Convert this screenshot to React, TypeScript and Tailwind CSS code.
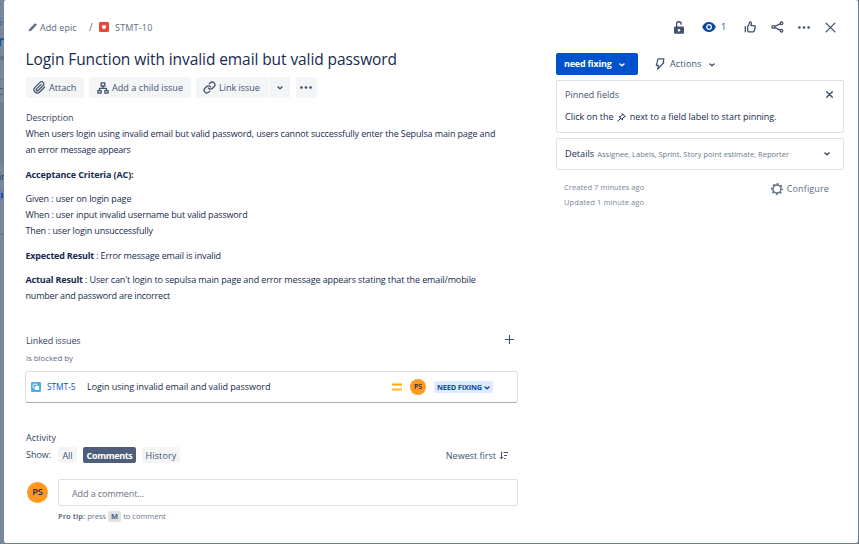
import type { ReactNode } from "react";

type IconProps = { className?: string };

const Chevron = ({ className = "" }: IconProps) => (
  <svg viewBox="0 0 6 4" className={`h-[4px] w-[6px] shrink-0 ${className}`} fill="none" stroke="currentColor" strokeWidth="1.5" strokeLinecap="round" strokeLinejoin="round">
    <path d="M1 1 3 2.800 5 1" />
  </svg>
);

const Pencil = () => (
  <svg viewBox="0 0 9 9" className="h-[9px] w-[9px] shrink-0" fill="currentColor">
    <path d="M.8 8.400 1.300 6 5.200 2.100 7 3.900 3.100 7.800Z" />
    <path d="M5.200 2.100 6.500.8a1.200 1.200 0 0 1 1.700 1.700L7 3.900Z" />
  </svg>
);

const Paperclip = () => (
  <svg viewBox="0 0 24 24" className="h-[13px] w-[13px] shrink-0" fill="none" stroke="currentColor" strokeWidth="2.300" strokeLinecap="round" strokeLinejoin="round">
    <path d="m21.400 11.100-9.200 9.200a6 6 0 0 1-8.500-8.500l9.200-9.200a4 4 0 0 1 5.700 5.700l-9.200 9.200a2 2 0 0 1-2.900-2.900l8.500-8.400" />
  </svg>
);

const ChildIssue = () => (
  <svg viewBox="0 0 12 12" className="h-[12px] w-[12px] shrink-0" fill="none" stroke="currentColor" strokeWidth="1.300" strokeLinejoin="round">
    <path d="M4.200.9h3.600v3.100H4.200ZM.9 8.600h3.200v2.500H.9ZM7.900 8.600h3.200v2.500H7.900ZM6 4v2.300M2.500 8.600V6.300h7v2.300" />
  </svg>
);

const LinkIcon = () => (
  <svg viewBox="0 0 24 24" className="h-[13px] w-[13px] shrink-0" fill="none" stroke="currentColor" strokeWidth="2.400" strokeLinecap="round" strokeLinejoin="round">
    <path d="M10 13a5 5 0 0 0 7.540.540l3-3a5 5 0 0 0-7.070-7.070l-1.720 1.710" />
    <path d="M14 11a5 5 0 0 0-7.540-.540l-3 3a5 5 0 0 0 7.070 7.070l1.710-1.710" />
  </svg>
);

const Dots = () => (
  <svg viewBox="0 0 12 3" className="h-[3px] w-[12px] shrink-0" fill="currentColor">
    <circle cx="1.400" cy="1.500" r="1.350" />
    <circle cx="6" cy="1.500" r="1.350" />
    <circle cx="10.600" cy="1.500" r="1.350" />
  </svg>
);

const Unlock = () => (
  <svg viewBox="0 0 10 13" className="h-[13px] w-[10px]" fill="none">
    <rect x="0" y="5.600" width="10" height="7.200" rx="1.200" fill="currentColor" />
    <path d="M2.600 6V3.200a2.300 2.300 0 0 1 4.600-.3v.9" stroke="currentColor" strokeWidth="1.300" />
    <circle cx="5" cy="9.200" r="1.200" fill="#fff" />
  </svg>
);

const Eye = () => (
  <svg viewBox="0 0 14 12" className="h-[12px] w-[14px]" fill="none">
    <path d="M.2 6C1.600 2.600 4 .9 7 .9s5.400 1.700 6.800 5.100C12.400 9.400 10 11.100 7 11.100S1.600 9.400.2 6Z" fill="#0747a6" />
    <circle cx="7" cy="6" r="2.300" fill="#0747a6" stroke="#fff" strokeWidth="1.300" />
  </svg>
);

const ThumbUp = () => (
  <svg viewBox="0 0 12 12" className="h-[12px] w-[12px]" fill="none" stroke="currentColor" strokeWidth="1.300" strokeLinejoin="round" strokeLinecap="round">
    <path d="M1.300 5.600v5.200" />
    <path d="M3.700 5.400C5.200 4.500 5.300 2.700 5.600 1.300 6.500.6 7.600 1.400 7.400 2.600L7 4.600h3c.9 0 1.400.7 1.200 1.500l-.9 3.700c-.2.700-.6 1-1.200 1H4.700c-.6 0-1-.4-1-1Z" />
  </svg>
);

const Share = () => (
  <svg viewBox="0 0 13 12" className="h-[12px] w-[13px]" fill="none" stroke="currentColor" strokeWidth="1.300">
    <circle cx="2.300" cy="6" r="1.400" />
    <circle cx="10.500" cy="2.300" r="1.300" />
    <circle cx="10.500" cy="9.700" r="1.300" />
    <path d="M3.700 5.300 9.200 2.900M3.700 6.700 9.200 9.100" />
  </svg>
);

const Cross = ({ className = "" }: IconProps) => (
  <svg viewBox="0 0 10 10" className={`shrink-0 ${className}`} fill="none" stroke="currentColor" strokeLinecap="round">
    <path d="m1 1 8 8M9 1 1 9" />
  </svg>
);

const Bolt = () => (
  <svg viewBox="0 0 10 12" className="h-[12px] w-[10px] shrink-0" fill="none" stroke="currentColor" strokeWidth="1.200" strokeLinejoin="round">
    <path d="M3 .9h5.900L8.100 4.500h.8L2.700 11l.7-3.600H1.300Z" />
  </svg>
);

const Pin = () => (
  <svg viewBox="0 0 9 9" className="mt-px mr-[4px] ml-[3px] h-[9px] w-[9px] shrink-0" fill="none" stroke="currentColor" strokeWidth="1" strokeLinejoin="round" strokeLinecap="round">
    <path d="M5.500.9 8.200 3.600 6.900 4 5.600 5.300 5.400 7 2.200 3.700l1.700-.2L5.200 2.200ZM3.600 5.400.8 8" />
  </svg>
);

const Gear = () => (
  <svg viewBox="0 0 12 12" className="h-[12px] w-[12px] shrink-0" fill="none" stroke="currentColor">
    <circle cx="6" cy="6" r="4" strokeWidth="1.400" />
    <circle cx="6" cy="6" r="5.100" strokeWidth="1.600" strokeDasharray="2 2.006" strokeDashoffset="1" />
  </svg>
);

const SortDown = () => (
  <svg viewBox="0 0 10 9" className="h-[9px] w-[10px] shrink-0" fill="none" stroke="currentColor" strokeWidth="1">
    <path d="M2.500.5v7.300M.8 6l1.700 1.800L4.200 6M4.500 1.500H9M5 4.500h3M5 7.500h1.500" />
  </svg>
);

const ToolButton = ({ className, children }: { className: string; children: ReactNode }) => (
  <button className={`flex h-[21px] items-center rounded-[2px] bg-[#f4f5f7] ${className}`}>{children}</button>
);

function Backdrop() {
  return (
    <div className="flex w-[4px] shrink-0 flex-col overflow-hidden bg-[#7a869e] text-[#465675]">
      <div className="h-[16px]" />
      <div className="h-[12px] text-[9px] leading-[12px] text-[#345f9b]">
        <span className="-ml-[3px]">6-</span>
      </div>
      <div className="h-[22px] text-[14px] leading-[26px] font-semibold text-[#0b5296]">
        <span className="-ml-[2px]">r</span>
      </div>
      <div className="h-[29px] text-[8px] leading-[13px]">
        <span className="-ml-[5px]">ne</span>
      </div>
      <div className="h-[25px] border-y border-[#6c7894] text-[9px] leading-[23px]">
        <span className="-ml-[2px]">C</span>
      </div>
      <div className="h-[60px] bg-[#707d98]" />
      <div className="h-[26px] text-[9px] leading-[26px] text-[#26385b]">
        <span className="-ml-px">in</span>
      </div>
      <div className="flex h-[11px] items-center bg-[#6b82ae]">
        <div className="ml-px h-[5px] w-[2px] bg-[#24509b]" />
      </div>
      <div className="h-[34px] border-b border-[#60708f] bg-[#7986a0]" />
    </div>
  );
}

function IssueBody() {
  return (
    <main className="flex w-[492px] shrink-0 flex-col">
      <h1 className="mt-[10px] -ml-[0.5px] h-[24px] text-[15.5px] leading-[24px] font-medium tracking-[-0.085px] whitespace-nowrap text-[#172b4d]">
        Login Function with invalid email but valid password
      </h1>

      <div className="mt-[6px] flex items-center text-[9.100px] text-[#42526e]">
        <ToolButton className="w-[58px] gap-[3px] pl-[7px]">
          <Paperclip />
          <span>Attach</span>
        </ToolButton>
        <ToolButton className="ml-[5px] w-[102px] gap-[3px] pl-[8px]">
          <ChildIssue />
          <span className="tracking-[0.02px] whitespace-nowrap">Add a child issue</span>
        </ToolButton>
        <ToolButton className="ml-[5px] w-[72px] gap-[3px] rounded-r-none pl-[7px]">
          <LinkIcon />
          <span className="tracking-[-0.05px] whitespace-nowrap">Link issue</span>
        </ToolButton>
        <ToolButton className="ml-px w-[21px] justify-center rounded-l-none">
          <Chevron />
        </ToolButton>
        <ToolButton className="ml-[6px] w-[21px] justify-center pr-px">
          <Dots />
        </ToolButton>
      </div>

      <h2 className="mt-[12px] h-[16px] text-[9px] leading-[16px] tracking-[-0.05px] text-[#344563]">Description</h2>
      <div className="-ml-[0.5px] text-[9px] leading-[16px] whitespace-nowrap text-[#172b4d]">
        <p className="tracking-[-0.132px]">
          When users login using invalid email but valid password, users cannot successfully enter the Sepulsa main page and
          <br />
          <span className="tracking-[-0.2px]">an error message appears</span>
        </p>
        <p className="mt-[9px] font-bold tracking-[-0.12px]">Acceptance Criteria (AC):</p>
        <p className="mt-[8px] tracking-[-0.156px]">
          <span className="tracking-[-0.09px]">Given : user on login page</span>
          <br />
          When : user input invalid username but valid password
          <br />
          Then : user login unsuccessfully
        </p>
        <p className="mt-[9px] tracking-[-0.14px]">
          <strong className="font-bold tracking-[-0.2px]">Expected Result</strong> : Error message email is invalid
        </p>
        <p className="mt-[8px] tracking-[-0.12px]">
          <strong className="font-bold tracking-[-0.17px]">Actual Result</strong> : User can't login to sepulsa main page and error message appears stating that the email/mobile
          <br />
          <span className="tracking-[-0.19px]">number and password are incorrect</span>
        </p>
      </div>

      <div className="mt-[29px] flex h-[16px] items-center justify-between pr-[4px]">
        <h2 className="text-[9px] leading-[16px] font-medium tracking-[-0.1px] text-[#344563]">Linked issues</h2>
        <svg viewBox="0 0 9 9" className="mb-[3px] h-[9px] w-[9px]" stroke="#42526e" strokeWidth="1.100">
          <path d="M4.500 0v9M0 4.500h9" />
        </svg>
      </div>
      <p className="mt-[2px] h-[14px] text-[8px] leading-[14px] font-medium tracking-[-0.08px] text-[#5e6c84]">is blocked by</p>

      <div className="mt-[6px] -ml-px flex h-[32px] w-[493px] items-center rounded-[3px] border border-[#dfe1e6] border-b-[#a5adba] pl-[5px]">
        <svg viewBox="0 0 10 10" className="h-[10px] w-[10px] shrink-0">
          <rect width="10" height="10" rx="1.200" fill="#4bade8" />
          <rect x="2.200" y="2.200" width="3.800" height="3.800" rx=".5" fill="none" stroke="#fff" strokeWidth=".9" />
          <rect x="4.100" y="4.100" width="4" height="4" rx=".5" fill="#fff" />
        </svg>
        <a className="ml-[5px] w-[40px] pl-px text-[8.300px] leading-[12px] font-medium text-[#0052cc]">STMT-5</a>
        <span className="ml-px flex-1 text-[9px] leading-[14px] tracking-[-0.055px] text-[#172b4d]">Login using invalid email and valid password</span>
        <svg viewBox="0 0 10 8" className="h-[8px] w-[10px] shrink-0">
          <path d="M0 .5h10v2H0z" fill="#ffab00" />
          <path d="M0 5.500h10v2H0z" fill="#ffb92e" />
        </svg>
        <span className="ml-[8px] flex h-[16px] w-[16px] items-center justify-center rounded-full bg-[#ff991f] pb-px text-[7px] leading-[14px] font-semibold text-[#172b4d]">PS</span>
        <span className="mr-[24px] ml-[8px] flex h-[12px] w-[59px] items-center rounded-[2px] bg-[#deebff] pl-[3px] text-[7.300px] font-bold tracking-[-0.12px] whitespace-nowrap text-[#0747a6]">
          NEED FIXING
          <Chevron className="mt-px ml-[2px]" />
        </span>
      </div>

      <h2 className="mt-[27px] h-[16px] text-[9px] leading-[16px] font-medium text-[#344563]">Activity</h2>
      <div className="mt-px flex h-[16px] items-center text-[9px] text-[#42526e]">
        <span className="w-[32px] leading-[16px] text-[#344563]">Show:</span>
        <button className="h-[16px] w-[19px] rounded-[2px] bg-[#f4f5f7] pt-px leading-[15px]">All</button>
        <button className="ml-[6px] h-[16px] w-[53px] rounded-[2px] bg-[#505f79] pt-px leading-[15px] font-bold tracking-[-0.32px] text-white">Comments</button>
        <button className="ml-[6px] h-[16px] w-[38px] rounded-[2px] bg-[#f4f5f7] pt-px leading-[15px] tracking-[0.12px]">History</button>
        <span className="ml-auto pt-px leading-[15px]">Newest first</span>
        <span className="mr-[9px] ml-[3px]">
          <SortDown />
        </span>
      </div>

      <div className="mt-[16px] flex items-start">
        <span className="mt-[3px] ml-px flex h-[21px] w-[21px] items-center justify-center rounded-full bg-[#ff991f] text-[9.500px] font-semibold tracking-[-0.4px] text-[#172b4d]">PS</span>
        <div className="ml-[10px] flex-1">
          <div className="flex h-[27px] items-center rounded-[2px] border border-[#dfe1e6] pt-[2px] pl-[13px] text-[9px] tracking-[-0.1px] text-[#6b7280]">Add a comment...</div>
          <p className="mt-[5px] flex h-[11px] items-center text-[7.500px] text-[#6b778c]">
            <strong className="font-bold">Pro tip:</strong>
            <span className="ml-[2px]">press</span>
            <kbd className="ml-[2px] flex h-[11px] w-[13px] items-center justify-center rounded-[2px] bg-[#dfe1e6] font-['Open_Sans'] text-[7.500px] font-bold text-[#505f79]">M</kbd>
            <span className="ml-[2px]">to comment</span>
          </p>
        </div>
      </div>
    </main>
  );
}

function Sidebar() {
  return (
    <aside className="ml-[38px] w-[288px] shrink-0">
      <div className="mt-[16px] flex h-[22px] items-center text-[9px]">
        <button className="flex h-[22px] w-[82px] items-center rounded-[2px] bg-[#0052cc] pl-[8px] font-bold tracking-[-0.2px] whitespace-nowrap text-white">
          need fixing
          <Chevron className="mt-px ml-[7px]" />
        </button>
        <button className="ml-[17px] flex items-center text-[#42526e]">
          <Bolt />
          <span className="ml-[5px] tracking-[0.13px]">Actions</span>
          <Chevron className="mt-px ml-[7px]" />
        </button>
      </div>

      <section className="mt-[5px] h-[53px] rounded-[2px] border border-[#dfe1e6] pr-[10px] pl-[8px] text-[9px]">
        <div className="mt-[6px] flex h-[16px] items-center justify-between text-[#42526e]">
          <span className="font-medium">Pinned fields</span>
          <Cross className="mb-px h-[7px] w-[7px] stroke-2" />
        </div>
        <p className="mt-[6px] flex h-[16px] items-center whitespace-nowrap text-[#172b4d]">
          <span>Click on the</span>
          <Pin />
          <span className="tracking-[-0.045px]">next to a field label to start pinning.</span>
        </p>
      </section>

      <section className="mt-[5px] flex h-[32px] items-center rounded-[2px] border border-[#dfe1e6] pr-[13px] pl-[8px]">
        <span className="text-[9.200px] font-medium text-[#172b4d]">Details</span>
        <span className="ml-[3px] flex-1 pt-px text-[7.500px] tracking-[0.01px] whitespace-nowrap text-[#6b778c]">Assignee, Labels, Sprint, Story point estimate, Reporter</span>
        <Chevron className="text-[#344563]" />
      </section>

      <div className="mt-[10px] flex justify-between pr-[15px] pl-[8px]">
        <div className="text-[7.500px] leading-[15px] tracking-[0.06px] text-[#7a869a]">
          <p>Created 7 minutes ago</p>
          <p className="tracking-[0.1px]">Updated 1 minute ago</p>
        </div>
        <button className="mt-[3px] flex h-[12px] items-center text-[9px] text-[#5e6c84]">
          <Gear />
          <span className="ml-[4px] tracking-[0.14px]">Configure</span>
        </button>
      </div>
    </aside>
  );
}

export default function App() {
  return (
    <div className="flex h-[544px] w-[859px] overflow-hidden bg-[#6f7b93] font-['Open_Sans','Noto_Sans',sans-serif]">
      <Backdrop />
      <div className="flex h-[543px] w-[854px] flex-col rounded-[2px] bg-white pl-[22px]">
        <header className="flex h-[37px] items-center pt-[17px] text-[9px] text-[#5e6c84]">
          <span className="ml-[2px] flex w-[61px] items-center gap-[3px] whitespace-nowrap">
            <Pencil />
            <span className="pt-px tracking-[0.06px]">Add epic</span>
          </span>
          <span className="w-[10px] pt-px text-[10px]">/</span>
          <svg viewBox="0 0 10 10" className="h-[10px] w-[10px]">
            <rect width="10" height="10" rx="1.200" fill="#e5493a" />
            <circle cx="5" cy="5" r="2.100" fill="#fff" />
          </svg>
          <span className="ml-[6px] pt-px tracking-[0.2px]">STMT-10</span>
          <div className="mr-[22px] ml-auto flex items-center text-[#42526e]">
            <Unlock />
            <span className="ml-[18px] flex w-[42px] items-center gap-[5px] text-[#0052cc]">
              <Eye />
              <span>1</span>
            </span>
            <ThumbUp />
            <span className="ml-[15px]">
              <Share />
            </span>
            <span className="ml-[14px]">
              <Dots />
            </span>
            <Cross className="ml-[15px] h-[11px] w-[11px] stroke-[1.2]" />
          </div>
        </header>
        <div className="flex">
          <IssueBody />
          <Sidebar />
        </div>
      </div>
    </div>
  );
}
